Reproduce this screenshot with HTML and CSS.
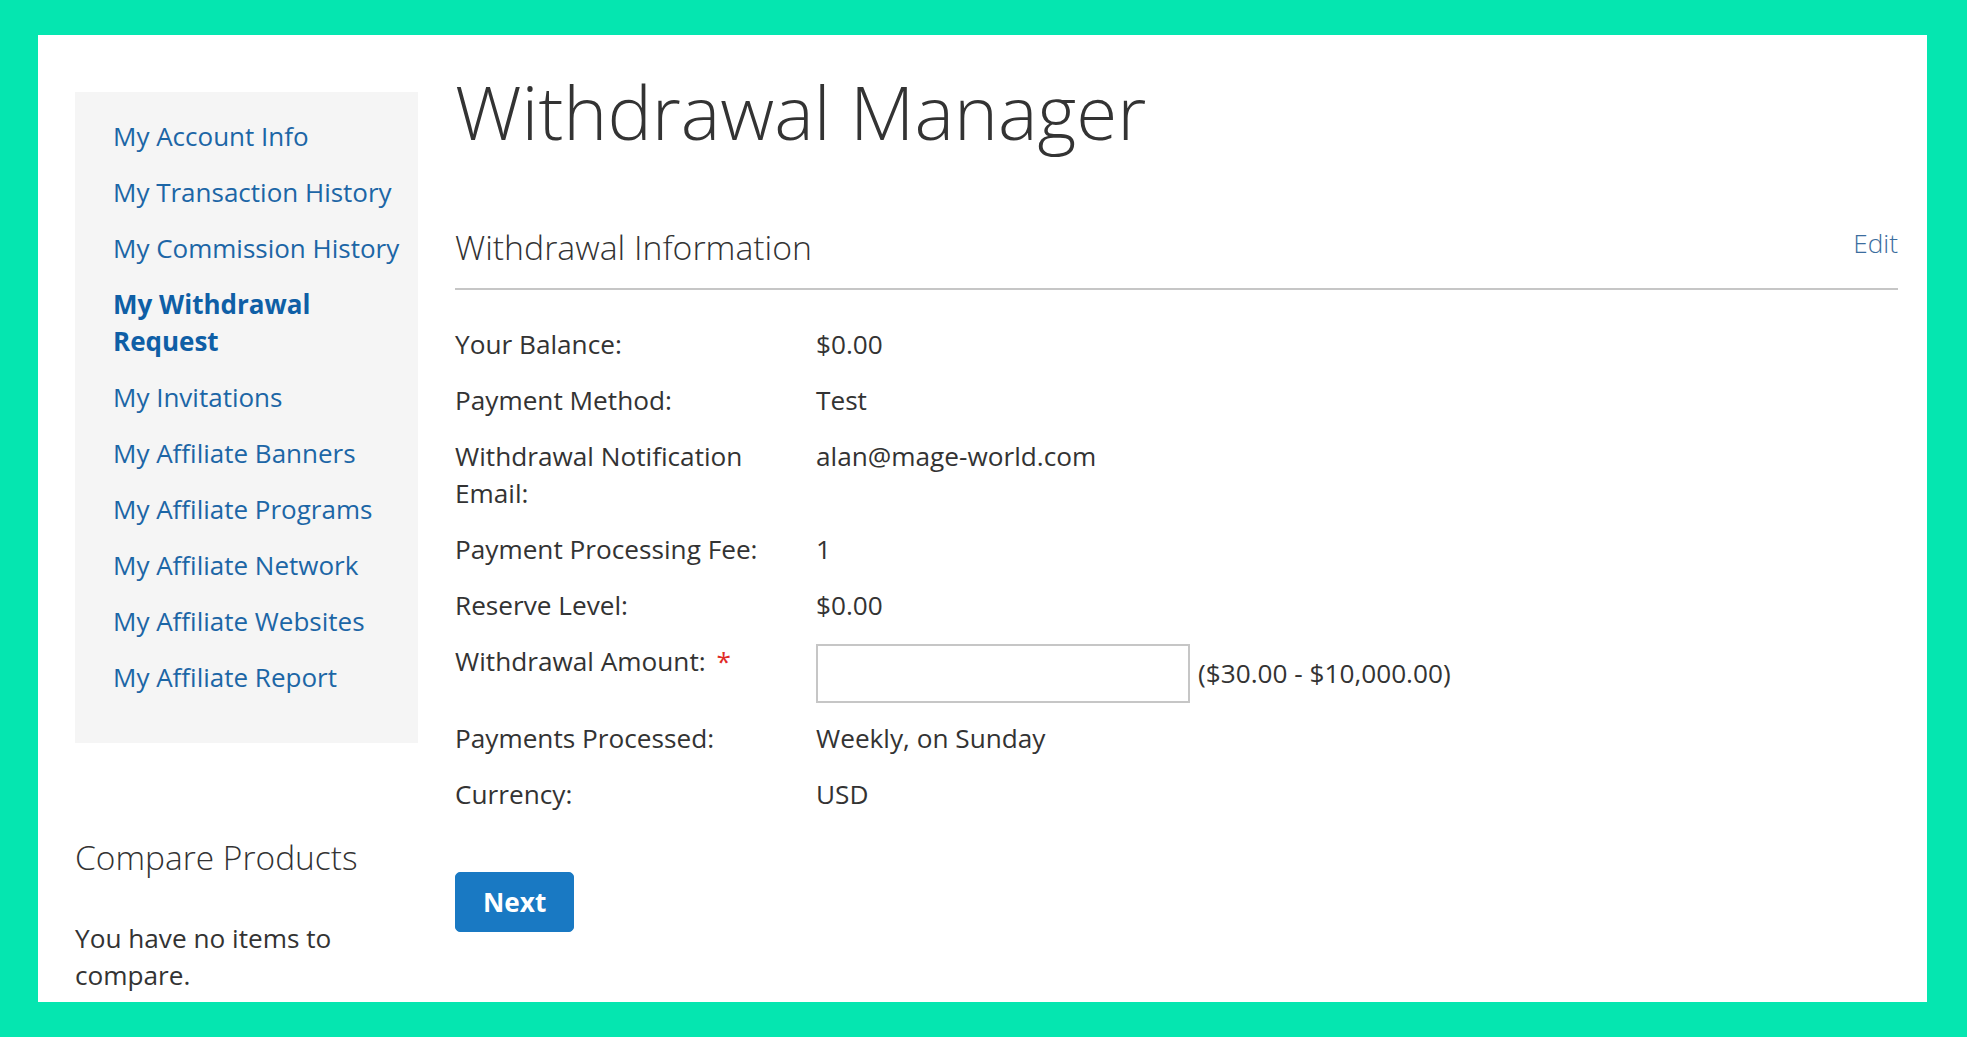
FILE: index.html
```html
<!DOCTYPE html>
<html lang="en">
  <head>
    <meta charset="UTF-8" />
    <title>Withdrawal Manager</title>
    <link rel="stylesheet" href="styles.css">
  </head>
  <body>
    <div class="frame">
      <div class="page">
        <div class="sidebar">
          <ul class="account-nav">
            <li><a href="#">My Account Info</a></li>
            <li><a href="#">My Transaction History</a></li>
            <li><a href="#">My Commission History</a></li>
            <li class="current"><strong>My Withdrawal Request</strong></li>
            <li><a href="#">My Invitations</a></li>
            <li><a href="#">My Affiliate Banners</a></li>
            <li><a href="#">My Affiliate Programs</a></li>
            <li><a href="#">My Affiliate Network</a></li>
            <li><a href="#">My Affiliate Websites</a></li>
            <li><a href="#">My Affiliate Report</a></li>
          </ul>

          <div class="block-compare">
            <div class="block-title">Compare Products</div>
            <div class="empty">You have no items to compare.</div>
          </div>
        </div>

        <div class="main">
          <h1 class="page-title">Withdrawal Manager</h1>

          <div class="section-head">
            <div class="section-title">Withdrawal Information</div>
            <a href="#" class="edit-link">Edit</a>
          </div>

          <div class="info">
            <div class="row">
              <div class="label">Your Balance:</div>
              <div class="value">$0.00</div>
            </div>
            <div class="row">
              <div class="label">Payment Method:</div>
              <div class="value">Test</div>
            </div>
            <div class="row">
              <div class="label">Withdrawal Notification Email:</div>
              <div class="value">alan@mage-world.com</div>
            </div>
            <div class="row">
              <div class="label">Payment Processing Fee:</div>
              <div class="value">1</div>
            </div>
            <div class="row">
              <div class="label">Reserve Level:</div>
              <div class="value">$0.00</div>
            </div>
            <div class="row row-input">
              <div class="label">Withdrawal Amount: <span class="required">*</span></div>
              <div class="value">
                <input type="text" class="amount-input" />
                <span class="range">($30.00 - $10,000.00)</span>
              </div>
            </div>
            <div class="row">
              <div class="label">Payments Processed:</div>
              <div class="value">Weekly, on Sunday</div>
            </div>
            <div class="row">
              <div class="label">Currency:</div>
              <div class="value">USD</div>
            </div>
          </div>

          <div class="actions">
            <button class="btn-primary">Next</button>
          </div>
        </div>
      </div>
    </div>
  </body>
</html>
```

FILE: styles.css
```css
* {
  margin: 0;
  padding: 0;
  box-sizing: border-box;
}

body {
  font-family: 'Open Sans', 'Liberation Sans', sans-serif;
  font-size: 26.2px;
  line-height: 37px;
  color: #333;
  background-color: #05e6b0;
  padding: 35px 40px 35px 38px;
}

.frame {
  background: white;
  height: 967px;
  overflow: hidden;
}

.page {
  display: flex;
  gap: 37px;
  padding: 35px 29px 0 37px;
}

/* sidebar */

.sidebar {
  width: 343px;
  flex-shrink: 0;
  margin-top: 21.5px;
}

.account-nav {
  list-style: none;
  background-color: #f5f5f5;
  padding: 26px 10px 28px 38px;
  font-size: 26px;
}

.account-nav li {
  margin-bottom: 19px;
}

.account-nav a {
  color: #1c66a6;
  text-decoration: none;
}

.account-nav .current strong {
  color: #0f5fa6;
  font-weight: 700;
}

.block-compare {
  margin-top: 95px;
}

.block-title {
  font-size: 33.5px;
  line-height: 38px;
  font-weight: 300;
  margin-bottom: 44px;
}

/* main */

.main {
  flex: 1;
}

.page-title {
  font-size: 74.6px;
  line-height: 82px;
  font-weight: 300;
}

.section-head {
  display: flex;
  justify-content: space-between;
  align-items: flex-start;
  margin-top: 73px;
  padding-bottom: 19px;
  border-bottom: 2px solid #c6c6c6;
}

.section-title {
  font-size: 33.8px;
  line-height: 44px;
  font-weight: 300;
}

.edit-link {
  color: #3b6d9e;
  font-weight: 300;
  text-decoration: none;
}

.info {
  margin-top: 36px;
}

.row {
  display: flex;
  margin-bottom: 19px;
}

.row .label {
  width: 331px;
  margin-right: 30px;
  flex-shrink: 0;
}

.required {
  color: #e02b27;
  margin-left: 4px;
}

.row-input {
  margin-bottom: 17px;
}

.row-input .value {
  display: flex;
  align-items: center;
  gap: 8px;
  padding-top: 1px;
}

.amount-input {
  width: 374px;
  height: 59px;
  border: 2px solid #c6c6c6;
  font-family: inherit;
  font-size: 26.2px;
  padding: 0 12px;
}

.actions {
  padding-top: 40px;
}

.btn-primary {
  background: #1979c3;
  border: 1px solid #1979c3;
  color: white;
  font-family: inherit;
  font-size: 26.2px;
  line-height: 37px;
  font-weight: 700;
  padding: 10.5px 27px;
  border-radius: 5px;
  cursor: pointer;
}
```
